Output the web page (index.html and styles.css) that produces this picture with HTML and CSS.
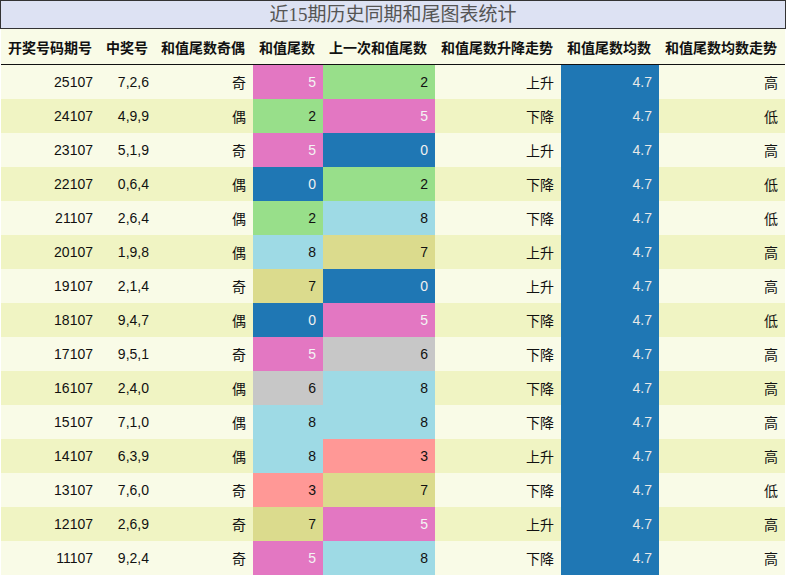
FILE: index.html
```html
<!DOCTYPE html>
<html lang="zh">
<head>
<meta charset="utf-8">
<title>近15期历史同期和尾图表统计</title>
<link rel="stylesheet" href="styles.css">
</head>
<body>
<div class="title">近15期历史同期和尾图表统计</div>
<table class="grid">
<colgroup>
<col class="w1"><col class="w2"><col class="w3"><col class="w4"><col class="w5"><col class="w6"><col class="w7"><col class="w8">
</colgroup>
<thead>
<tr><th>开奖号码期号</th><th>中奖号</th><th>和值尾数奇偶</th><th>和值尾数</th><th>上一次和值尾数</th><th>和值尾数升降走势</th><th>和值尾数均数</th><th>和值尾数均数走势</th></tr>
</thead>
<tbody>
<tr><td>25107</td><td>7,2,6</td><td>奇</td><td class="c5">5</td><td class="c2">2</td><td>上升</td><td class="avg">4.7</td><td>高</td></tr>
<tr><td>24107</td><td>4,9,9</td><td>偶</td><td class="c2">2</td><td class="c5">5</td><td>下降</td><td class="avg">4.7</td><td>低</td></tr>
<tr><td>23107</td><td>5,1,9</td><td>奇</td><td class="c5">5</td><td class="c0">0</td><td>上升</td><td class="avg">4.7</td><td>高</td></tr>
<tr><td>22107</td><td>0,6,4</td><td>偶</td><td class="c0">0</td><td class="c2">2</td><td>下降</td><td class="avg">4.7</td><td>低</td></tr>
<tr><td>21107</td><td>2,6,4</td><td>偶</td><td class="c2">2</td><td class="c8">8</td><td>下降</td><td class="avg">4.7</td><td>低</td></tr>
<tr><td>20107</td><td>1,9,8</td><td>偶</td><td class="c8">8</td><td class="c7">7</td><td>上升</td><td class="avg">4.7</td><td>高</td></tr>
<tr><td>19107</td><td>2,1,4</td><td>奇</td><td class="c7">7</td><td class="c0">0</td><td>上升</td><td class="avg">4.7</td><td>高</td></tr>
<tr><td>18107</td><td>9,4,7</td><td>偶</td><td class="c0">0</td><td class="c5">5</td><td>下降</td><td class="avg">4.7</td><td>低</td></tr>
<tr><td>17107</td><td>9,5,1</td><td>奇</td><td class="c5">5</td><td class="c6">6</td><td>下降</td><td class="avg">4.7</td><td>高</td></tr>
<tr><td>16107</td><td>2,4,0</td><td>偶</td><td class="c6">6</td><td class="c8">8</td><td>下降</td><td class="avg">4.7</td><td>高</td></tr>
<tr><td>15107</td><td>7,1,0</td><td>偶</td><td class="c8">8</td><td class="c8">8</td><td>下降</td><td class="avg">4.7</td><td>高</td></tr>
<tr><td>14107</td><td>6,3,9</td><td>偶</td><td class="c8">8</td><td class="c3">3</td><td>上升</td><td class="avg">4.7</td><td>高</td></tr>
<tr><td>13107</td><td>7,6,0</td><td>奇</td><td class="c3">3</td><td class="c7">7</td><td>下降</td><td class="avg">4.7</td><td>低</td></tr>
<tr><td>12107</td><td>2,6,9</td><td>奇</td><td class="c7">7</td><td class="c5">5</td><td>上升</td><td class="avg">4.7</td><td>高</td></tr>
<tr><td>11107</td><td>9,2,4</td><td>奇</td><td class="c5">5</td><td class="c8">8</td><td>下降</td><td class="avg">4.7</td><td>高</td></tr>
</tbody>
</table>
</body>
</html>
```

FILE: styles.css
```css
html, body {
  margin: 0;
  padding: 0;
  background: #ffffff;
}
body {
  width: 786px;
  font-family: "Liberation Sans", "Noto Sans CJK SC", sans-serif;
  font-size: 14px;
  color: #111111;
}
.title {
  box-sizing: border-box;
  height: 29px;
  border: 1px solid #333333;
  background: #dde2f3;
  color: #555555;
  font-family: "Liberation Serif", "Noto Sans CJK SC", serif;
  font-size: 19px;
  line-height: 27px;
  text-align: center;
}
.grid {
  table-layout: fixed;
  border-collapse: collapse;
  border-spacing: 0;
  width: 784px;
  margin: 0 1px;
}
.w1 { width: 99px; }
.w2 { width: 56px; }
.w3 { width: 97px; }
.w4 { width: 70px; }
.w5 { width: 112px; }
.w6 { width: 126px; }
.w7 { width: 98px; }
.w8 { width: 126px; }
.grid th {
  height: 35px;
  padding: 0 8px 0 0;
  background: #f9fbe7;
  font-weight: bold;
  font-size: 14px;
  text-align: right;
  color: #111111;
  border-bottom: 1px solid #111111;
  white-space: nowrap;
}
.grid td {
  height: 34px;
  padding: 0 7px 0 0;
  text-align: right;
  white-space: nowrap;
}
.grid tbody tr:nth-child(odd) td { background: #f9fbe7; }
.grid tbody tr:nth-child(even) td { background: #f0f4c3; }
.grid tbody tr td.c0 { background: #1f77b4; color: #f0f0f0; }
.grid tbody tr td.c2 { background: #98df8a; color: #111111; }
.grid tbody tr td.c3 { background: #ff9896; color: #111111; }
.grid tbody tr td.c5 { background: #e377c2; color: #f4f4f4; }
.grid tbody tr td.c6 { background: #c7c7c7; color: #111111; }
.grid tbody tr td.c7 { background: #dbdb8d; color: #111111; }
.grid tbody tr td.c8 { background: #9edae5; color: #111111; }
.grid tbody tr td.avg { background: #1f77b4; color: #e8e8e8; }
```
